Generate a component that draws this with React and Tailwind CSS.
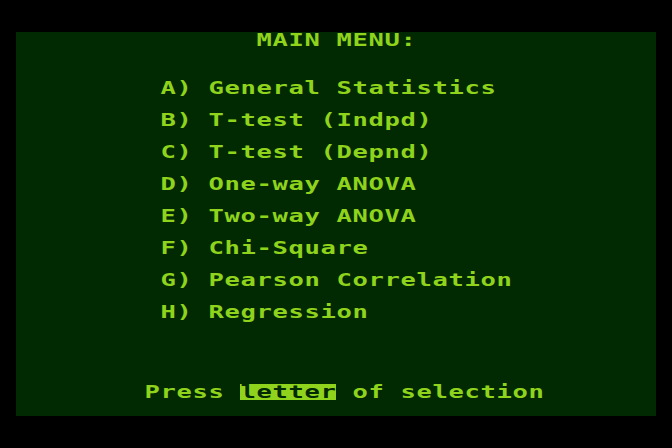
import React from "react";

// 40 x 24 character screen, each cell 16x16
const COLS = 40;

const pad = (col, text) => " ".repeat(col) + text;

const lines = [
  pad(15, "MAIN MENU:"),
  "",
  "",
  pad(9, "A) General Statistics"),
  "",
  pad(9, "B) T-test (Indpd)"),
  "",
  pad(9, "C) T-test (Depnd)"),
  "",
  pad(9, "D) One-way ANOVA"),
  "",
  pad(9, "E) Two-way ANOVA"),
  "",
  pad(9, "F) Chi-Square"),
  "",
  pad(9, "G) Pearson Correlation"),
  "",
  pad(9, "H) Regression"),
  "",
  "",
  "",
  "",
  pad(8, "Press letter of selection"),
  "",
];

// inverse-video spans: row -> [start, end)
const inverse = { 22: [14, 20] };

function Line({ text, inv }) {
  const cells = text.padEnd(COLS, " ").slice(0, COLS).split("");
  return (
    <div className="flex h-4">
      {cells.map((ch, i) => {
        const on = inv && i >= inv[0] && i < inv[1];
        return (
          <span
            key={i}
            className={
              "flex h-4 w-4 items-center justify-center " +
              (on ? "bg-[#8fd31c] text-[#012a02]" : "")
            }
          >
            <span className="inline-block scale-x-150">{ch === " " ? "\u00a0" : ch}</span>
          </span>
        );
      })}
    </div>
  );
}

export default function App() {
  return (
    <div className="w-[672px] h-[448px] bg-black pt-8 pl-4">
      <div
        className="w-[640px] h-[384px] bg-[#012a02] text-[#8fd31c] font-bold text-[17px] leading-4"
        style={{ fontFamily: '"DejaVu Sans Mono", "Liberation Mono", monospace' }}
      >
        {lines.map((t, r) => (
          <Line key={r} text={t} inv={inverse[r]} />
        ))}
      </div>
    </div>
  );
}
